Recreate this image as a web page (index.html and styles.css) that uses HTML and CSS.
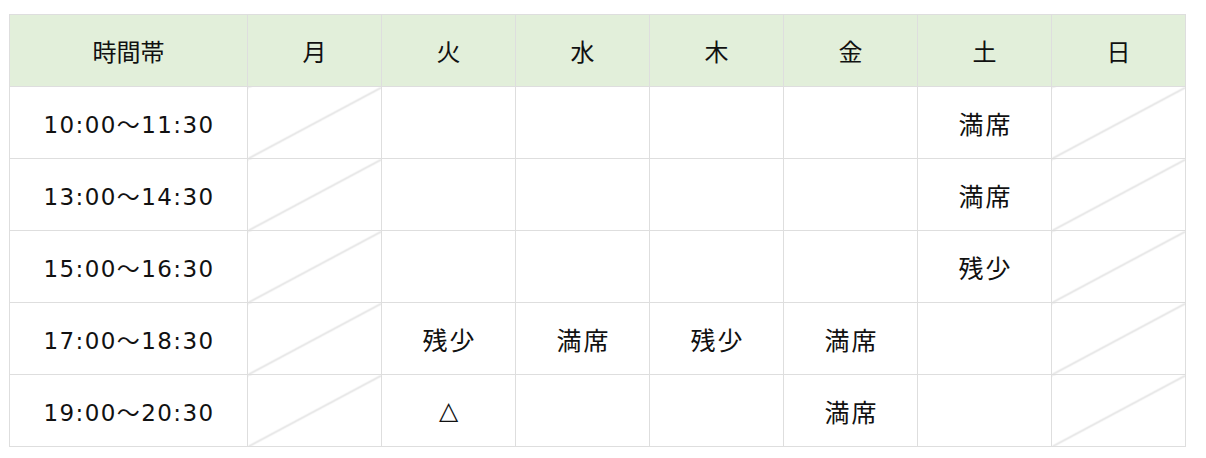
FILE: index.html
```html
<!DOCTYPE html>
<html lang="ja">
<head>
<meta charset="utf-8">
<title>時間帯</title>
<link rel="stylesheet" href="styles.css">
</head>
<body>
<table class="schedule">
  <thead>
    <tr>
      <th class="col-time">時間帯</th>
      <th>月</th><th>火</th><th>水</th><th>木</th><th>金</th><th>土</th><th>日</th>
    </tr>
  </thead>
  <tbody>
    <tr>
      <td class="time">10:00～11:30</td>
      <td class="na"></td><td></td><td></td><td></td><td></td><td>満席</td><td class="na"></td>
    </tr>
    <tr>
      <td class="time">13:00～14:30</td>
      <td class="na"></td><td></td><td></td><td></td><td></td><td>満席</td><td class="na"></td>
    </tr>
    <tr>
      <td class="time">15:00～16:30</td>
      <td class="na"></td><td></td><td></td><td></td><td></td><td>残少</td><td class="na"></td>
    </tr>
    <tr>
      <td class="time">17:00～18:30</td>
      <td class="na"></td><td>残少</td><td>満席</td><td>残少</td><td>満席</td><td></td><td class="na"></td>
    </tr>
    <tr>
      <td class="time">19:00～20:30</td>
      <td class="na"></td><td>△</td><td></td><td></td><td>満席</td><td></td><td class="na"></td>
    </tr>
  </tbody>
</table>
</body>
</html>
```
FILE: styles.css
```css
html, body {
  margin: 0;
  padding: 0;
  background: #ffffff;
}
body {
  padding: 14px 9px;
  font-family: "DejaVu Sans", "Noto Sans CJK JP", sans-serif;
  color: #111111;
}
.schedule {
  border-collapse: collapse;
  table-layout: fixed;
}
.schedule th,
.schedule td {
  border: 1px solid #dedede;
  height: 71px;
  padding: 0;
  text-align: center;
  vertical-align: middle;
  font-size: 24px;
  font-weight: normal;
  width: 133px;
}
.schedule th {
  background: #e2efda;
}
.schedule th.col-time {
  width: 237px;
}
.schedule td {
  font-size: 25px;
  letter-spacing: 2px;
  padding-left: 2px;
  width: 131px;
}
.schedule td.time {
  font-size: 23px;
  letter-spacing: 1.4px;
  padding-left: 1px;
  width: 236px;
}
.schedule td.na {
  background: linear-gradient(to bottom right,
    transparent calc(50% - 1.5px),
    #dedede 50%,
    transparent calc(50% + 1.5px));
}
```
